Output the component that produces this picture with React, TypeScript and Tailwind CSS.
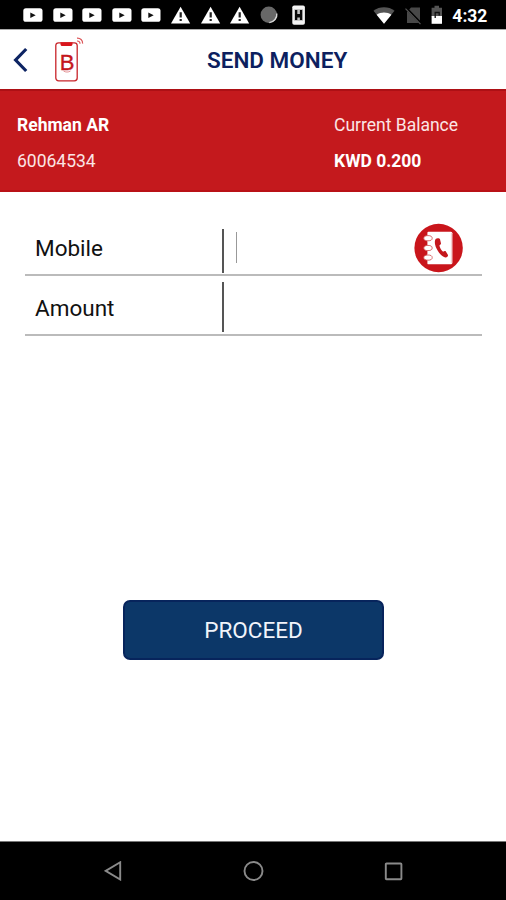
import { useState } from 'react';

const notifications = ['video', 'video', 'video', 'video', 'video', 'alert', 'alert', 'alert', 'sync', 'phone'];

function NotificationIcon({ type }: { type: string }) {
  if (type === 'video') {
    return (
      <svg width="20" height="16" viewBox="0 0 20 16">
        <rect x="0.3" y="1.2" width="19.2" height="13.6" rx="2.6" fill="#fff" />
        <path d="M7.3 5.5v5.6l5.4-2.8z" fill="#111" />
      </svg>
    );
  }
  if (type === 'alert') {
    return (
      <svg width="20" height="18" viewBox="0 0 20 18">
        <path d="M9.6 0.8L19.2 17.5H0z" fill="#fff" />
        <path d="M8.6 6.3h2.2v5.2H8.6zM8.6 12.9h2.2v2.2H8.6z" fill="#222" />
      </svg>
    );
  }
  if (type === 'sync') {
    return (
      <svg width="20" height="18" viewBox="0 0 20 18">
        <circle cx="8.8" cy="8.8" r="8.2" fill="#686868" />
        <path d="M16.8 7.5c.6 4.5-2.8 8.6-7.5 9.1" fill="none" stroke="#d8d8d8" strokeWidth="1.4" />
      </svg>
    );
  }
  return (
    <svg width="20" height="20" viewBox="0 0 20 20">
      <rect x="3.3" y="0.5" width="12.6" height="19.2" rx="1.8" fill="#f2f2f2" />
      <rect x="5.2" y="4" width="8.8" height="12" fill="#c4c4c4" />
      <path d="M6 5h2.3v4h2.6V5h2.3v10h-2.3v-2.5H8.3V15H6z" fill="#0a0a0a" />
    </svg>
  );
}

function StatusBar() {
  return (
    <div className="flex h-[29px] shrink-0 items-center bg-black pl-[23px]">
      <div className="flex gap-[9.6px]">
        {notifications.map((type, i) => (
          <div key={i} className="flex w-5 items-center justify-center">
            <NotificationIcon type={type} />
          </div>
        ))}
      </div>
      {/* wifi, no sim, battery */}
      <svg className="mt-[2px] ml-[64px]" width="22" height="18" viewBox="0 0 22 18">
        <path d="M11 16.8L0.5 3.8C6.5-0.8 15.5-0.8 21.5 3.8z" fill="#555" />
        <path d="M11 16.8L3.6 7.8c4-3 10.8-3 14.8 0z" fill="#fff" />
      </svg>
      <svg className="mt-[2px] ml-[10px]" width="17" height="18" viewBox="0 0 17 18">
        <path d="M6 0.5h9v15.5H2V5z" fill="#484848" />
        <path d="M0.5 0.5L16.5 17" stroke="#000" strokeWidth="2.6" />
        <path d="M0.5 1.7L15.5 17.2" stroke="#555" strokeWidth="1.2" />
      </svg>
      <svg className="mt-[1px] ml-[9px]" width="12" height="20" viewBox="0 0 12 20">
        <path d="M3.5 0.8h4.5v2h3v9H0.6v-9h2.9z" fill="#555" />
        <path d="M0.6 11h10.4v7.8H0.6z" fill="#fff" />
        <path d="M4.2 13V7.5h4v3" fill="none" stroke="#111" strokeWidth="1.3" />
      </svg>
      <span className="mt-[5px] ml-[9px] text-[17.5px] leading-none font-bold text-white">4:32</span>
    </div>
  );
}

function Logo() {
  return (
    <svg width="32" height="46" viewBox="0 0 32 46">
      <rect x="3.8" y="5.8" width="21.4" height="38" rx="2.8" fill="none" stroke="#c8242a" strokeWidth="1.3" />
      <path d="M8.5 5.2h12v2.1c0 1.2-.8 1.8-1.8 1.8h-8.4c-1 0-1.8-.6-1.8-1.8z" fill="#d9161c" />
      <text
        x="15"
        y="32.8"
        textAnchor="middle"
        fontSize="22"
        fill="#c4161c"
        stroke="#c4161c"
        strokeWidth="0.4"
        className="font-['Liberation_Sans',sans-serif]"
      >
        B
      </text>
      <path d="M11.5 34c2 1.4 5 1.4 7 0" fill="none" stroke="#dd777a" strokeWidth="0.8" />
      <path d="M25 1.2c3.3-.2 5.8 2 5.6 5.4M25 4c1.9-.1 3 1 3 2.8" fill="none" stroke="#dc5558" strokeWidth="1.2" />
    </svg>
  );
}

function ContactsIcon() {
  return (
    <svg width="50" height="50" viewBox="0 0 50 50">
      <circle cx="24.6" cy="25" r="24.2" fill="#c9151b" />
      <rect x="12.8" y="8.7" width="25.6" height="32.6" rx="1.5" fill="#fff" />
      <path d="M37.4 10v30.5" stroke="#f0c4c5" strokeWidth="0.9" />
      {/* binder rings along the spine */}
      {[15.2, 25, 34.6].map((y) => (
        <ellipse key={y} cx="14" cy={y} rx="4.2" ry="2.6" fill="#fff" stroke="#d55a5e" strokeWidth="0.9" />
      ))}
      <path d="M12.6 9v3.2M12.6 18.2v3.8M12.6 28v3.6M12.6 37.6V41" stroke="#c9151b" strokeWidth="1.6" />
      <path
        d="M22 15.8c-1.7 1.5-1.5 5.5.4 9.4 2.2 4.7 5.7 8.7 9 9.2 1.6.2 2.9-1.3 2.6-2.5l-2.3-3.6c-.7-.7-1.9-.1-2.6.5-1.9-1.5-3.2-4.1-3.7-6.4.8-.4 1.7-1 1.6-2l-1-4.2c-.4-1-3-1.4-4-.4z"
        fill="#c4161c"
      />
    </svg>
  );
}

function App() {
  const [mobile, setMobile] = useState('');
  const [amount, setAmount] = useState('');

  return (
    <div className="flex h-[900px] w-[506px] flex-col overflow-hidden bg-white font-['Roboto',sans-serif]">
      <StatusBar />

      <header className="flex h-[60px] shrink-0 items-center border-t border-[#aaa]">
        <button className="ml-[13px]">
          <svg width="16" height="26" viewBox="0 0 16 26">
            <path d="M13.2 2L2.6 13l10.6 11" fill="none" stroke="#0d2463" strokeWidth="3.2" />
          </svg>
        </button>
        <div className="ml-[23px]">
          <Logo />
        </div>
        <h1 className="mt-[2px] ml-[123px] text-[22.5px] font-semibold whitespace-nowrap text-[#0d1f5f]">SEND MONEY</h1>
      </header>

      <section className="flex h-[103px] shrink-0 border-y-2 border-t-[#ad1015] border-b-[#b91116] bg-[#c4191d] pt-[22px] text-[17.5px] leading-[25px] text-white">
        <div className="ml-[17px] w-[317px]">
          <p className="font-bold">Rehman AR</p>
          <p className="mt-[11px] text-[#fbe5e5]">60064534</p>
        </div>
        <div>
          <p className="text-[#fbe5e5]">Current Balance</p>
          <p className="mt-[11px] font-bold">KWD 0.200</p>
        </div>
      </section>

      <main className="flex flex-1 flex-col">
        <div className="mx-[25px] mt-[24px] flex h-[60px] w-[457px] items-center border-b-2 border-[#bbb] pl-[10px] text-[22.5px] text-[#111]">
          <label className="w-[187px] pt-[8px]">Mobile</label>
          <div className="mt-[11px] h-[44px] w-[1.5px] bg-[#555]" />
          <div className="mt-[5px] ml-[12.5px] h-[31px] w-px bg-[#999]" />
          <input
            value={mobile}
            onChange={(e) => setMobile(e.target.value)}
            className="h-10 w-[176.5px] bg-transparent outline-none"
          />
          <div className="mt-[5px]">
            <ContactsIcon />
          </div>
        </div>
        <div className="mx-[25px] flex h-[60px] w-[457px] items-center border-b-2 border-[#bbb] pl-[10px] text-[22.5px] text-[#111]">
          <label className="w-[187px] pt-[8px]">Amount</label>
          <div className="mt-[4px] h-[50px] w-[1.5px] bg-[#555]" />
          <input
            value={amount}
            onChange={(e) => setAmount(e.target.value)}
            className="h-10 w-[220px] bg-transparent pl-3 outline-none"
          />
        </div>

        <button className="mt-[264px] ml-[123px] h-[60px] w-[261px] rounded-[7px] border-2 border-[#07245c] bg-[#0c3768] pt-[1px] text-[22.5px] text-[#f1f4fb]">
          PROCEED
        </button>
      </main>

      <nav className="flex h-[59px] shrink-0 items-center border-t border-[#777] bg-black">
        <svg className="ml-[104px]" width="18" height="20" viewBox="0 0 18 20">
          <path d="M16.2 1.3v17.2L1.7 9.9z" fill="none" stroke="#8a8a8a" strokeWidth="1.9" />
        </svg>
        <svg className="ml-[121px]" width="21" height="20" viewBox="0 0 21 20">
          <circle cx="10.5" cy="10" r="9" fill="none" stroke="#8a8a8a" strokeWidth="1.9" />
        </svg>
        <svg className="ml-[120px]" width="19" height="19" viewBox="0 0 19 19">
          <rect x="1.8" y="1.5" width="15.6" height="15.8" rx="0.7" fill="none" stroke="#8a8a8a" strokeWidth="1.9" />
        </svg>
      </nav>
    </div>
  );
}

export default App;
